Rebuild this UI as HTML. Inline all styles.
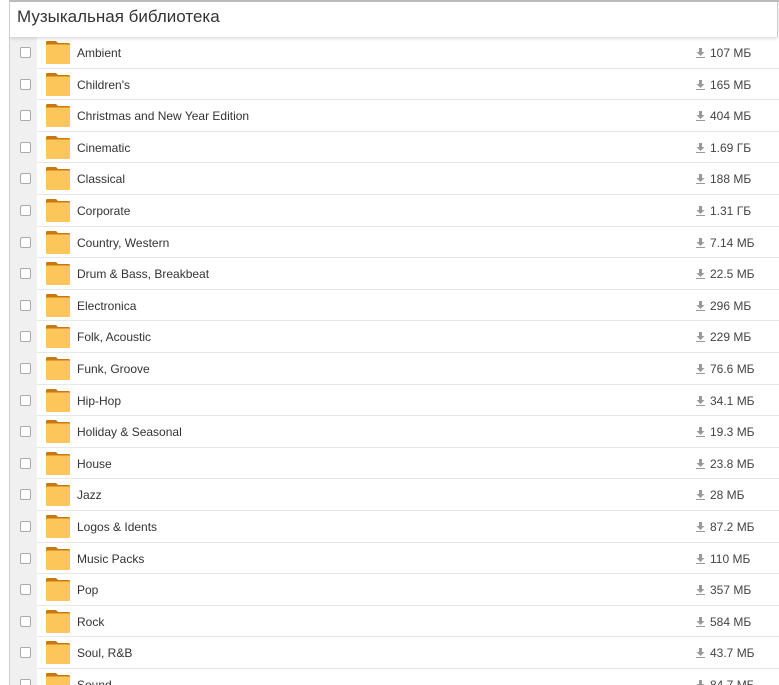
<!DOCTYPE html>
<html style="height:685px;overflow:hidden"><head><meta charset="utf-8"><style>
body{margin:0;width:779px;height:685px;overflow:hidden;background:#fff;font-family:"Liberation Sans",Arial,sans-serif;position:relative;}
.wrap{position:absolute;left:9px;top:0;width:770px;height:685px;overflow:hidden;border-left:1px solid #ccc;border-top:2px solid #bbb;box-sizing:border-box;}
.hdr{height:35px;font-size:17px;color:#333;padding:5px 0 0 7px;box-sizing:border-box;box-shadow:0 2px 3px rgba(0,0,0,0.12);position:relative;z-index:2;background:#fff;border-right:1px solid #ccc;width:768px;}
.col{position:absolute;left:0;top:35px;width:27px;height:700px;background:#f0f0f0;}
.row{position:absolute;left:0;width:770px;height:31.6px;}
.row .cb{position:absolute;left:10px;top:10px;width:9px;height:9px;border:1px solid #aaa;border-radius:2px;background:#fff;}
.row .line{position:absolute;left:27px;right:0;bottom:0;border-bottom:1px solid #e8e8e8;}
.fold{position:absolute;left:36px;top:4px;width:24px;height:23px;}
.name{position:absolute;left:67px;top:9px;font-size:12px;color:#333;}
.size{position:absolute;left:686px;top:9px;font-size:12px;color:#444;white-space:nowrap;}
.size i{display:inline-block;width:9px;height:10px;margin-right:5px;vertical-align:-1px;}
</style></head><body>
<div class="wrap">
<div class="hdr">Музыкальная библиотека</div>
<div class="col"></div>
<div id="rows"></div>
</div>
<script>
var d=[["Ambient","107 МБ"],["Children's","165 МБ"],["Christmas and New Year Edition","404 МБ"],["Cinematic","1.69 ГБ"],["Classical","188 МБ"],["Corporate","1.31 ГБ"],["Country, Western","7.14 МБ"],["Drum & Bass, Breakbeat","22.5 МБ"],["Electronica","296 МБ"],["Folk, Acoustic","229 МБ"],["Funk, Groove","76.6 МБ"],["Hip-Hop","34.1 МБ"],["Holiday & Seasonal","19.3 МБ"],["House","23.8 МБ"],["Jazz","28 МБ"],["Logos & Idents","87.2 МБ"],["Music Packs","110 МБ"],["Pop","357 МБ"],["Rock","584 МБ"],["Soul, R&B","43.7 МБ"],["Sound","84.7 МБ"]];
var h="";
d.forEach(function(r,i){
var t=(35+i*31.6);
h+='<div class="row" style="top:'+t+'px"><div class="cb"></div><div class="line"></div>'+
'<svg class="fold" viewBox="0 0 24 23"><path d="M0 1.5Q0 0 1.5 0H10L12 2H22.5Q24 2 24 3.5V5H0Z" fill="#c9770f"/><rect x="0" y="3.5" width="24" height="19.5" rx="1" fill="#fdc65a"/></svg>'+
'<div class="name">'+r[0].replace(/&/g,"&amp;")+'</div><div class="size"><i><svg width="9" height="10" viewBox="0 0 9 10"><path d="M3 0H6V4H8.5L4.5 8L0.5 4H3Z" fill="#999"/><rect x="0" y="9" width="9" height="1" fill="#999"/></svg></i>'+r[1]+'</div></div>';
});
document.getElementById("rows").innerHTML=h;
</script>
</body></html>
